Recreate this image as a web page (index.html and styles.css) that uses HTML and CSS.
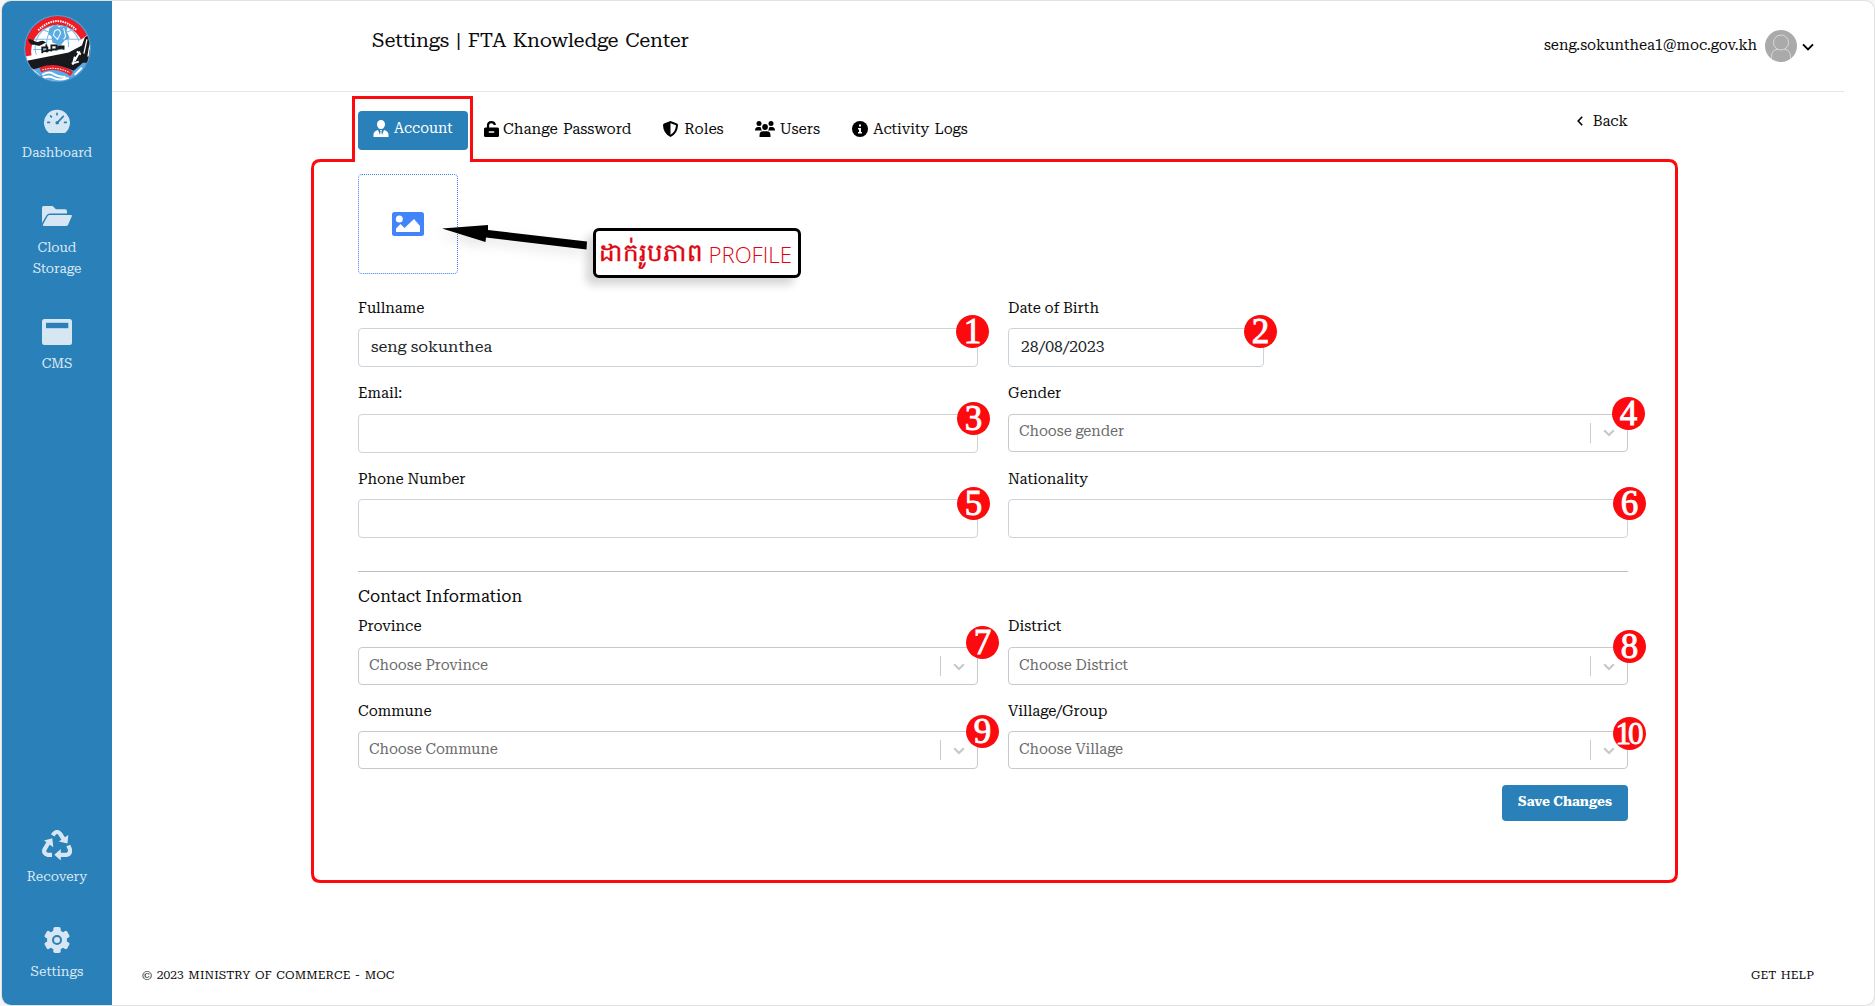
FILE: index.html
```html
<!DOCTYPE html>
<html lang="en">
<head>
<meta charset="utf-8">
<title>Settings | FTA Knowledge Center</title>
<link rel="stylesheet" href="styles.css">
</head>
<body>
<div class="app">
  <nav class="sidebar">
    <svg class="logo" viewBox="0 0 66 66">
      <defs><clipPath id="disc"><circle cx="33" cy="33" r="32"/></clipPath></defs>
      <circle cx="33" cy="33" r="33" fill="#4b9fdb"/>
      <g clip-path="url(#disc)">
        <circle cx="33" cy="33" r="32" fill="#ee1c25"/>
        <circle cx="33" cy="36" r="26" fill="#fff"/>
        <g fill="none" stroke="#7dbcea" stroke-width="1"><circle cx="33" cy="32" r="22"/><ellipse cx="33" cy="32" rx="11" ry="22"/><path d="M10 24h46M9 34h48M33 9v40M18 14q15 8 31 0"/></g>
        <path d="M25 13l6-3 4 2 8-2-1 6 3 7-5 2-4 5-8-3-1-6-3-2z" fill="#5aabe4"/>
        <path d="M30 16q5-4 6 2l-3 6-4-4zM39 13l2 8-2 3" fill="none" stroke="#fff" stroke-width="1"/>
        <path d="M4 24c7 0 6 4 11 2s5 1 7 1c-4 1-5 4-9 3s-7 1-9-6z" fill="#17191c"/>
        <path d="M18 38v-6h4v-3M23 31v6M27 36v-6h5v5M34 34v-3h5v4M18 36l21-4" fill="none" stroke="#17191c" stroke-width="1.800"/>
        <path d="M0 41l40-7 15-9 11-8v24L40 66H0z" fill="#fff"/>
        <path d="M3 45l41-8 13-7 3-8 6-4v26L50 58 18 62 6 57z" fill="#17191c"/>
        <path d="M62 24l-3 14M65 29l-2 12" stroke="#fff" stroke-width="1.3"/>
        <path d="M55 36l-5 9M48 49l2-8M47 48l7-2M52 36l4 3" stroke="#fff" stroke-width="1.8" fill="none"/>
        <path d="M8 54q22-8 41 1l9-8 8 0v20H0V45z" fill="#5aabe4"/>
        <path d="M16 54q17-6 31 4" fill="none" stroke="#e8202c" stroke-width="5"/>
        <path d="M18 54q15-4 27 3" fill="none" stroke="#fff" stroke-width="1" stroke-dasharray="1.5 1"/>
        <path d="M18 59q6-4 11-1t12 3M16 63q8-4 13-1t15 0M7 53l8 7M50 59l7-7" fill="none" stroke="#fff" stroke-width="2"/>
        <path d="M14 15Q33 -3 52 15" fill="none" stroke="#fff" stroke-width="2" stroke-dasharray="1.5 .9"/>
      </g>
    </svg>
    <a class="nav-item dashboard">
      <svg width="26" height="24" viewBox="0 0 26 24"><path fill="#d6e6f2" d="M5 24A13 13 0 1 1 21 24z"/><g stroke="#2a80b9" stroke-width="1.7" stroke-linecap="round"><path d="M13 4.3v1.4M6.6 7l.8.9M3.8 13.4h1.6M20.6 13.4h1.6"/><path d="M13.6 13.4L19.3 7.3"/></g><circle cx="13.2" cy="13.7" r="1.8" fill="#2a80b9"/></svg>
      <span>Dashboard</span>
    </a>
    <a class="nav-item cloud">
      <svg width="30" height="20" viewBox="0 0 30 20" fill="#d6e6f2"><path d="M0 17V1.8Q0 0 1.8 0H10.6L14 3.2H23Q25 3.2 25 5V7.5H8Q5.6 7.5 4.6 9.3z"/><path d="M1 18.5L5.5 10.3Q6.2 9 7.8 9H29q1.400 0 .8 1.300L26.200 18.500Q25.500 20 24 20H2Q.4 20 1 18.500z"/></svg>
      <span>Cloud<br>Storage</span>
    </a>
    <a class="nav-item cms">
      <svg width="30" height="26" viewBox="0 0 30 26"><rect width="30" height="26" rx="2.500" fill="#d6e6f2"/><path d="M4 3.800h22.300v5.400H4z" fill="#2a80b9"/></svg>
      <span>CMS</span>
    </a>
    <a class="nav-item recovery">
      <svg width="30" height="30" viewBox="0 0 30 30" fill="#d6e6f2"><g fill="none" stroke="#d6e6f2" stroke-width="4.200"><path d="M10.800 5.500L12 3.600Q15 .4 18 3.600L21.500 9"/><path d="M10 24.800H5.500Q1 23.500 2.500 19.500L6.300 13"/><path d="M26.300 15.500L28 19.500Q28.500 24 25 24.800H17"/></g><path d="M26.300 5L25.500 13.600 16.800 11.600zM2 10.500L10.300 8.200 11.300 17.200zM18.800 19V30.500L12.300 24.800z"/></svg>
      <span>Recovery</span>
    </a>
    <a class="nav-item settings">
      <svg width="26" height="26" viewBox="0 0 26 26" fill="#d6e6f2"><defs><rect id="tooth" x="9.300" y="0" width="7.400" height="26" rx="1.800"/></defs><circle cx="13" cy="13" r="10"/><use href="#tooth"/><use href="#tooth" transform="rotate(60 13 13)"/><use href="#tooth" transform="rotate(120 13 13)"/><circle cx="13" cy="13" r="4" fill="#d6e6f2" stroke="#2a80b9" stroke-width="2"/></svg>
      <span>Settings</span>
    </a>
  </nav>

  <div class="main">
    <header class="header">
      <h1>Settings | FTA Knowledge Center</h1>
      <div class="user">
        <span>seng.sokunthea1@moc.gov.kh</span>
        <svg class="avatar" width="32" height="32" viewBox="0 0 32 32"><circle cx="16" cy="16" r="16" fill="#aaa"/><g fill="none" stroke="#d8d8d8"><circle cx="16" cy="12.500" r="7.500"/><path d="M6.500 28.500v-2q0-6.500 6-7.300M25.500 28.500v-2q0-6.500-6-7.300"/></g></svg>
        <svg class="caret" width="12" height="8" viewBox="0 0 12 8"><path d="M1 1.300l5 5 5-5" fill="none" stroke="#000" stroke-width="1.900"/></svg>
      </div>
    </header>

    <div class="content">
      <div class="toolbar">
        <div class="tabs">
          <a class="tab active"><svg width="16" height="17" viewBox="0 0 16 17"><path d="M8 0c2.400 0 4 1.700 4 4.200S10.400 9 8 9 4 6.700 4 4.200 5.600 0 8 0zM.5 17v-2.500Q.5 11 5 10l2 5 .6-3.500L7 10h2l-.6 1.500L9 15l2-5q4.500 1 4.500 4.500V17z" fill="#fff"/></svg><span>Account</span></a>
          <a class="tab password"><svg width="15" height="16" viewBox="0 0 15 16"><path d="M4 8V4.500Q4 1.100 7.300 1.100T10.800 4" fill="none" stroke="#000" stroke-width="2.200"/><rect x="0" y="6.500" width="15" height="9.500" rx="1.500"/><path d="M5.500 11h4" stroke="#fff" stroke-width="1.700" stroke-linecap="round"/></svg>Change Password</a>
          <a class="tab roles"><svg width="15" height="16" viewBox="0 0 15 16"><path d="M7.500 0L14 2.500Q15 3 15 4 14.800 12.500 7.500 16 .2 12.500 0 4 0 3 1 2.500z"/><path d="M7.500 2.200V13.700Q2.300 11 2 4.300z" fill="#fff" transform="matrix(-1 0 0 1 15 0)"/></svg>Roles</a>
          <a class="tab users"><svg width="20" height="16" viewBox="0 0 20 16"><circle cx="4" cy="2.500" r="2.500"/><circle cx="16" cy="2.500" r="2.500"/><circle cx="10" cy="6" r="2.900"/><path d="M0 9.500Q0 6 3 6h2.200Q6 6.300 6 7.200L6.800 9.500zM20 9.500Q20 6 17 6h-2.200Q14 6.300 14 7.200L13.200 9.500zM4.500 16v-1.500Q4.500 10.300 8 10.300h4q3.500 0 3.500 4.200V16z"/></svg>Users</a>
          <a class="tab logs"><svg width="16" height="16" viewBox="0 0 16 16"><circle cx="8" cy="8" r="8"/><path d="M7 3.500h2v2H7zM6 7h3v4h1v1.500H6V11h1V8.500H6z" fill="#fff"/></svg>Activity Logs</a>
        </div>
        <a class="back"><svg width="6" height="10" viewBox="0 0 6 10"><path d="M5.200.7L1.200 5l4 4.300" fill="none" stroke="#000" stroke-width="1.600"/></svg>Back</a>
      </div>

      <div class="upload">
        <svg width="32" height="24" viewBox="0 0 32 24"><rect width="32" height="24" rx="2.500" fill="#4285fa"/><circle cx="7.300" cy="7" r="3.500" fill="#fff"/><path d="M4 20v-3.500L8.500 12l4 4L22 7l6 7v6z" fill="#fff"/></svg>
      </div>

      <form class="grid personal">
        <div class="field"><label>Fullname</label><div class="input">seng sokunthea</div></div>
        <div class="field"><label>Date of Birth</label><div class="input date">28/08/2023</div></div>
        <div class="field"><label>Email:</label><div class="input"></div></div>
        <div class="field"><label>Gender</label><div class="select"><span>Choose gender</span><i></i><svg viewBox="0 0 12 8"><path d="M1.200 1.300L6 6l4.800-4.700"/></svg></div></div>
        <div class="field"><label>Phone Number</label><div class="input"></div></div>
        <div class="field"><label>Nationality</label><div class="input"></div></div>
      </form>

      <h2>Contact Information</h2>
      <form class="grid contact">
        <div class="field"><label>Province</label><div class="select"><span>Choose Province</span><i></i><svg viewBox="0 0 12 8"><path d="M1.200 1.300L6 6l4.800-4.700"/></svg></div></div>
        <div class="field"><label>District</label><div class="select"><span>Choose District</span><i></i><svg viewBox="0 0 12 8"><path d="M1.200 1.300L6 6l4.800-4.700"/></svg></div></div>
        <div class="field"><label>Commune</label><div class="select"><span>Choose Commune</span><i></i><svg viewBox="0 0 12 8"><path d="M1.200 1.300L6 6l4.800-4.700"/></svg></div></div>
        <div class="field"><label>Village/Group</label><div class="select"><span>Choose Village</span><i></i><svg viewBox="0 0 12 8"><path d="M1.200 1.300L6 6l4.800-4.700"/></svg></div></div>
      </form>
      <button class="save">Save Changes</button>
    </div>

    <footer class="footer"><span>© 2023 MINISTRY OF COMMERCE - MOC</span><span>GET HELP</span></footer>
  </div>
</div>

<svg class="outline" width="1875" height="1006" viewBox="0 0 1875 1006">
  <path d="M353.500 160.500V97.500H471.500V160.500H1668.500Q1676.500 160.500 1676.500 168.500V873.500Q1676.500 881.500 1668.500 881.500H320.500Q312.500 881.500 312.500 873.500V168.500Q312.500 160.500 320.500 160.500H355" fill="none" stroke="#fc0a0e" stroke-width="3"/>
  <path class="pointer" d="M442 228.500L488 225V230L587 241.500 586.500 249.500 486 237.500 485.500 242z"/>
</svg>
<div class="callout"><span class="khmer" lang="km">ដាក់រូបភាព</span><span class="latin">PROFILE</span></div>
<div class="badge b1">1</div><div class="badge b2">2</div><div class="badge b3">3</div><div class="badge b4">4</div><div class="badge b5">5</div>
<div class="badge b6">6</div><div class="badge b7">7</div><div class="badge b8">8</div><div class="badge b9">9</div><div class="badge ten b10">10</div>
</body>
</html>
```
FILE: styles.css
```css
* { box-sizing: border-box; }
body {
  margin: 0; padding: 1px 1px 1px 2px; height: 1006px; overflow: hidden; background: #f5f5f5; color: #0b0b0b;
  font-family: "Roboto Serif", "DejaVu Serif Condensed", serif; font-size: 14.8px; line-height: 24px;
  font-variant-numeric: lining-nums;
}
svg { display: block; flex: none; }
h1, h2 { margin: 0; font-weight: 400; }

.app { display: flex; height: 1004px; background: #fff; border-radius: 9px; overflow: hidden; box-shadow: 0 0 0 1px #e2e2e2; }

/* Sidebar */
.sidebar { width: 110px; flex: none; background: #2a80b9; display: flex; flex-direction: column; align-items: center; padding: 14px 0 23px; }
.logo { width: 67px; height: 67px; margin-bottom: 27px; }
.nav-item { display: flex; flex-direction: column; align-items: center; color: #dbe9f4; font-size: 13.4px; line-height: 21px; text-align: center; }
.dashboard span { margin-top: 9px; }
.cloud { margin-top: 43px; }
.cloud span { margin-top: 11px; }
.cms { margin-top: 40px; }
.cms span { margin-top: 8px; }
.recovery { margin-top: auto; }
.recovery span { margin-top: 6px; }
.settings { margin-top: 40px; }
.settings span { margin-top: 8px; }

/* Page */
.main { flex: 1; display: flex; flex-direction: column; }
.header { height: 91px; margin-right: 30px; padding-left: 260px; border-bottom: 1px solid #e6e6e6; display: flex; justify-content: space-between; }
.header h1 { font-size: 20px; line-height: 30px; padding-top: 24px; letter-spacing: -.25px; word-spacing: 2px; }
.user { display: flex; align-items: center; height: 32px; margin: 29px 30px 0 0; }
.user span { margin-top: -2px; font-size: 14.700px; }
.avatar { margin-left: 8px; }
.caret { margin: 1px 0 0 5px; }

.content { width: 1270px; margin-left: 246px; display: flex; flex-direction: column; }
.toolbar { display: flex; justify-content: space-between; padding-top: 19px; }
.tabs { display: flex; }
.tab { display: flex; align-items: center; height: 39px; gap: 4px; padding-bottom: 4px; font-size: 15px; word-spacing: 1.500px; }
.tab.active { width: 110px; padding: 0 0 3px 15px; border-radius: 4px; background: #2a80b9; color: #fff; font-size: 14.4px; }
.tab.active svg { margin-top: -2px; }
.tab.active span { margin-left: 1px; }
.password { margin-left: 16px; }
.roles { margin-left: 32px; gap: 6px; }
.users { margin-left: 31px; gap: 5px; }
.logs { margin-left: 32px; gap: 5px; font-size: 14.700px; }
.back { display: flex; align-items: center; gap: 10px; height: 24px; margin-top: -2px; }
.upload { width: 100px; height: 100px; margin-top: 24px; border: 1px dotted #3f80e8; border-radius: 4px; display: flex; align-items: center; justify-content: center; }

.grid { display: grid; grid-template-columns: 620px 620px; column-gap: 30px; }
.personal { margin-top: 22px; row-gap: 14.500px; padding-bottom: 33px; border-bottom: 1px solid #bdbdbd; }
.personal .field { height: 71px; }
.personal .field:nth-child(3) label, .personal .field:nth-child(4) label { margin: -1px 0 9px; }
label { display: block; height: 24px; margin-bottom: 8px; }
.input { height: 39px; padding: 6px 12px; border: 1px solid #ccd3da; border-radius: 4px; color: #212529; font-size: 16px; }
.date { width: 256px; font-size: 15.7px; }
.select { height: 38px; padding: 0 12px 0 10px; border: 1px solid #c9c9c9; border-radius: 4px; display: flex; align-items: center; color: #6b6b6b; font-size: 14.600px; }
.select span { flex: 1; margin-top: -3px; }
.select i { width: 1px; height: 20px; background: #ccc; }
.select svg { width: 12px; height: 8px; margin: 1px 0 0 12px; fill: none; stroke: #c8c8c8; stroke-width: 2.200; }
h2 { font-size: 16.600px; line-height: 24px; margin: 13px 0 5px; }
.contact { row-gap: 13px; }
.contact label { margin-bottom: 9px; }
.contact .field:nth-child(n+3) label { padding-top: 1px; }
.save { align-self: flex-end; width: 126px; height: 36px; margin-top: 16px; padding: 0 0 4px; border: 0; border-radius: 4px; background: #2a80b9; color: #fff; font: 700 13.500px "Roboto Serif", "DejaVu Serif Condensed", serif; }

.footer { display: flex; justify-content: space-between; margin: auto 60px 18px 30px; font-size: 12px; letter-spacing: .1px; word-spacing: 1.300px; }

/* Annotations laid over the page */
.outline { position: absolute; left: 0; top: 0; }
.pointer { filter: drop-shadow(-5px 5px 6px rgba(0, 0, 0, .1)); }
.callout { position: absolute; left: 593px; top: 228px; width: 208px; height: 50px; padding: 0 6px 0 3px; border: 3px solid #000; border-radius: 6px; background: #fff; box-shadow: -7px 7px 9px rgba(0, 0, 0, .16); color: #dd0510; display: flex; align-items: center; justify-content: space-between; white-space: nowrap; }
.khmer { font-family: "Open Sans", sans-serif; font-size: 24.500px; margin-top: -2px; -webkit-text-stroke: .4px; }
.latin { font-family: "Open Sans", sans-serif; font-weight: 300; font-size: 22.200px; margin-top: 3px; }
.badge { position: absolute; width: 33px; height: 33px; border-radius: 50%; background: #fc0a0e; color: #fff; font: 35px/33px "Liberation Serif", serif; text-align: center; -webkit-text-stroke: .9px #fff; }
.ten { font-size: 31px; letter-spacing: -3px; text-indent: -3px; }
.b1 { left: 956px; top: 315px; }
.b2 { left: 1244px; top: 315px; }
.b3 { left: 957px; top: 402px; }
.b4 { left: 1612px; top: 397px; }
.b5 { left: 957px; top: 487px; }
.b6 { left: 1613px; top: 487px; }
.b7 { left: 966px; top: 626px; }
.b8 { left: 1613px; top: 630px; }
.b9 { left: 966px; top: 715px; }
.b10 { left: 1613px; top: 717px; }
```
